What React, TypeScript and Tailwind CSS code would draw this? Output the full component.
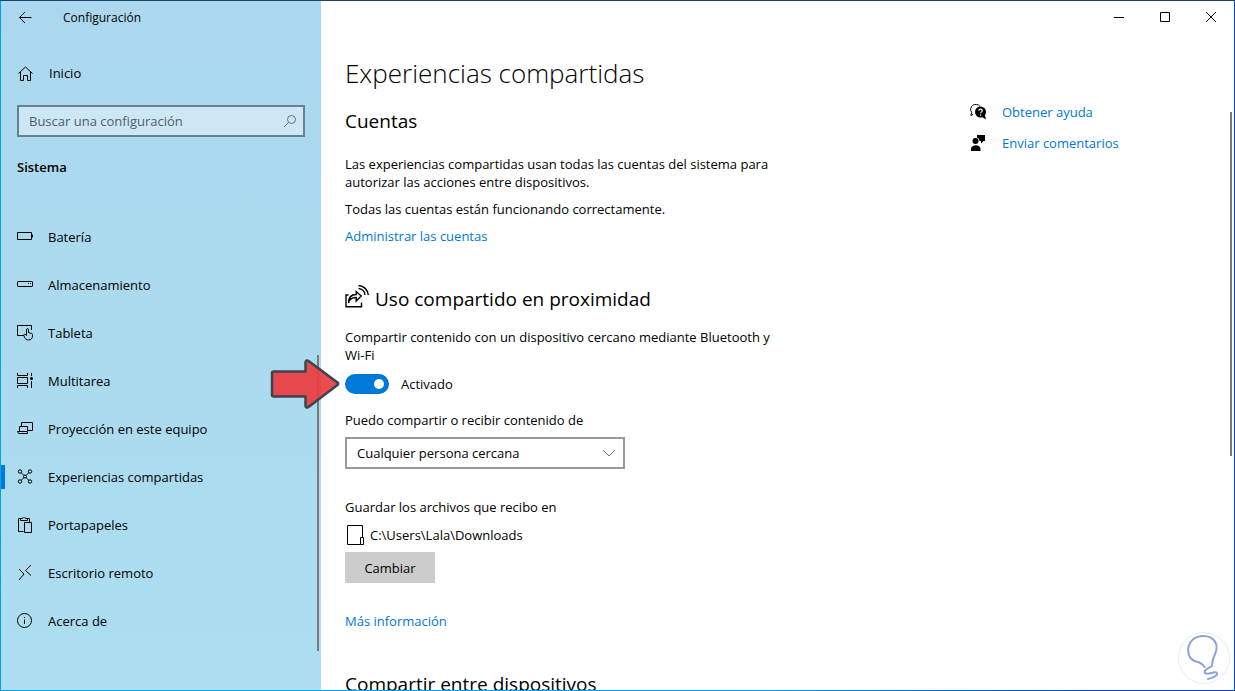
import { useState } from "react";
import type { ReactNode } from "react";

function Icon({ children, size = 16 }: { children: ReactNode; size?: number }) {
  return (
    <svg width={size} height={size} viewBox={`0 0 ${size} ${size}`} fill="none" stroke="currentColor" aria-hidden="true" className="shrink-0">
      {children}
    </svg>
  );
}

const navItems: { label: string; icon: ReactNode }[] = [
  {
    label: "Batería",
    icon: <path d="M.5 3.5h14v7H.5zM15.5 5.5v3" />,
  },
  {
    label: "Almacenamiento",
    icon: (
      <>
        <rect x=".5" y="4.5" width="15" height="5" rx=".5" />
        <path d="M11 6.5h1M13 6.5h1" />
      </>
    ),
  },
  {
    label: "Tableta",
    icon: (
      <>
        <path d="M7 10.5H.5v-10h14V5" />
        <path d="M9.5 9.5V4.7c0-1.5 2-1.5 2 0v3l2.8.6c.8.2 1.2.7 1.2 1.4V11c0 2.3-1.5 4-4 4-2 0-3.2-1-3.9-2.5L6.900 10.5c-.4-1 .9-1.7 1.6-1l1 1z" />
      </>
    ),
  },
  {
    label: "Multitarea",
    icon: (
      <>
        <path d="M.5 0v2.5h10V0M.5 4.5h10v6H.5zM.5 15v-2.5h10V15M14.5 0v3M14.5 8v7" />
        <circle cx="14.5" cy="5.5" r="1.5" fill="currentColor" stroke="none" />
      </>
    ),
  },
  {
    label: "Proyección en este equipo",
    icon: <path d="M4.5 5V1.5h11v8H11M2.5 10V5.5h8V10M.5 10.5h10v2h-9z" />,
  },
  {
    label: "Experiencias compartidas",
    icon: (
      <>
        <circle cx="3" cy="2.5" r="1.7" />
        <circle cx="13" cy="2.5" r="1.7" />
        <circle cx="3" cy="12.5" r="1.7" />
        <circle cx="13" cy="12.5" r="1.7" />
        <circle cx="8" cy="7.5" r="1.5" />
        <path d="M4.200 3.700 7 6.500M11.800 3.700 9 6.500M4.200 11.300 7 8.500M11.800 11.300 9 8.500" />
      </>
    ),
  },
  {
    label: "Portapapeles",
    icon: <path d="M3.5 1.5h-2v13h5M10.5 1.5h2V5M3.5 3.5v-2h2c0-2 3-2 3 0h2v2zM7.5 5.5h7v10h-7z" />,
  },
  {
    label: "Escritorio remoto",
    icon: <path d="m2 4 5 5-5 6M14 0 8.500 5.500l5.500 5" />,
  },
  {
    label: "Acerca de",
    icon: (
      <>
        <circle cx="7.5" cy="7.5" r="7" />
        <path d="M7.5 6.5V11M7.5 4v1" />
      </>
    ),
  },
];

function Sidebar() {
  const [current, setCurrent] = useState("Experiencias compartidas");
  const [query, setQuery] = useState("");

  return (
    <aside className="relative w-80 shrink-0 bg-linear-to-b from-[#abd8ee] to-[#acddf0]">
      <header className="flex h-[34px] items-center">
        <button type="button" aria-label="Atrás" className="flex h-8 w-12 items-center justify-center">
          <Icon>
            <path d="M14.5 7.5h-12M8 2 2.500 7.500 8 13" />
          </Icon>
        </button>
        <span className="ml-3.5 text-xs">Configuración</span>
      </header>

      <a href="#inicio" className="mt-3.5 flex h-12 items-center gap-4 px-4">
        <Icon>
          <path d="M1.5 8.5 8.500 2l7 6.500M3.500 7v8.500h3v-5h4v5h3V7" />
        </Icon>
        Inicio
      </a>

      <div className="relative mx-4 mt-2">
        <input
          type="text"
          aria-label="Buscar una configuración"
          placeholder="Buscar una configuración"
          value={query}
          onChange={(e) => setQuery(e.target.value)}
          className="block h-8 w-full border-2 border-[#67818e] bg-[#cee7f4] px-2.5 outline-none placeholder:text-[#4e6069]"
        />
        <span className="pointer-events-none absolute inset-y-0 right-2 flex items-center text-[#5f747e]">
          <Icon size={14}>
            <circle cx="8.5" cy="5.5" r="4" />
            <path d="M5.5 8.5 1 13" />
          </Icon>
        </span>
      </div>

      <h2 className="mt-5 px-4 leading-5 font-semibold">Sistema</h2>

      <nav className="mt-9">
        {navItems.map((item) => (
          <a
            key={item.label}
            href="#"
            aria-current={item.label === current ? "page" : undefined}
            onClick={() => setCurrent(item.label)}
            className="relative flex h-12 items-center gap-[15px] px-4"
          >
            {item.label === current && <span className="absolute left-0 h-6 w-1 bg-[#0078d7]" />}
            <Icon>{item.icon}</Icon>
            {item.label}
          </a>
        ))}
      </nav>

      <div className="absolute right-0.5 bottom-[39px] h-[296px] w-0.5 bg-[#7a7a7a]" />
    </aside>
  );
}

function WindowControls() {
  return (
    <div className="flex h-8 justify-end">
      <button type="button" aria-label="Minimizar" className="flex w-[46px] items-center justify-center">
        <Icon size={10}>
          <path d="M0 5.5h10" />
        </Icon>
      </button>
      <button type="button" aria-label="Maximizar" className="flex w-[46px] items-center justify-center">
        <Icon size={10}>
          <path d="M.5.5h9v9h-9z" />
        </Icon>
      </button>
      <button type="button" aria-label="Cerrar" className="flex w-[46px] items-center justify-center">
        <Icon size={10}>
          <path d="m0 0 10 10M10 0 0 10" />
        </Icon>
      </button>
    </div>
  );
}

function HelpLinks() {
  return (
    <div className="flex w-[264px] shrink-0 flex-col gap-[11px] pt-[69px] text-[#0078d7]">
      <a href="#ayuda" className="flex h-5 items-center gap-4">
        <span className="text-black">
          <Icon>
            <path d="M3 10.5.800 11.500l.8-3A5 5 0 1 1 10 2.500" />
            <circle cx="10.5" cy="8" r="5.5" fill="currentColor" stroke="none" />
            <path d="m12 13 4 2.500-1.300-5z" fill="currentColor" stroke="none" />
            <path d="M8.900 6.700c0-2.200 3.400-2.200 3.400 0 0 1.200-1.700 1.200-1.700 2.600M10.600 10.500v1.200" stroke="#fff" strokeWidth="1.2" />
          </Icon>
        </span>
        Obtener ayuda
      </a>
      <a href="#comentarios" className="flex h-5 items-center gap-4">
        <span className="text-black">
          <Icon>
            <g fill="currentColor" stroke="none">
              <path d="M7 0h8v6h-1.500L11 8.500V6H9.500A4 4 0 0 0 7 2.500z" />
              <circle cx="5.5" cy="6" r="3" />
              <path d="M1 16v-2c0-5 9.500-5 9.500 0v2z" />
            </g>
          </Icon>
        </span>
        Enviar comentarios
      </a>
    </div>
  );
}

function SharedExperiences() {
  const [enabled, setEnabled] = useState(true);
  const [audience, setAudience] = useState("Cualquier persona cercana");

  return (
    <main className="min-w-0 flex-1">
      <h1 className="mt-5 text-[26px] leading-10 font-light">Experiencias compartidas</h1>

      <section>
        <h2 className="mt-3.5 text-[19px] leading-7">Cuentas</h2>
        <p className="mt-5 max-w-[440px]">
          Las experiencias compartidas usan todas las cuentas del sistema para autorizar las acciones entre dispositivos.
        </p>
        <p className="mt-[9px]">Todas las cuentas están funcionando correctamente.</p>
        <a href="#cuentas" className="mt-[9px] block text-[#0078d7]">
          Administrar las cuentas
        </a>
      </section>

      <section>
        <h2 className="mt-10 flex items-start gap-1.5 text-[19px] leading-7">
          <Icon size={24}>
            <g strokeWidth="1.4">
              <path d="M3.500 10H1v11.800h15.500V17.500" />
              <path d="M3.500 18c.8-4 3.500-5.500 7.700-5.500V16l5-5-5-4.500v3C6.500 9.500 3.500 12.500 3.500 18z" />
              <path d="M13.500 3.500c3.600.3 6.300 3 6.600 6.500M13.500.500c5.300.300 9.300 4.200 9.800 9.500" />
            </g>
          </Icon>
          Uso compartido en proximidad
        </h2>
        <p className="mt-[15px] max-w-[440px]">
          Compartir contenido con un dispositivo cercano mediante Bluetooth y Wi-Fi
        </p>
        <label className="mt-2.5 flex w-fit items-center gap-3">
          <input
            type="checkbox"
            role="switch"
            checked={enabled}
            onChange={(e) => setEnabled(e.target.checked)}
            className="flex h-5 w-11 appearance-none items-center rounded-full bg-[#7a7a7a] px-[5px] before:size-2.5 before:rounded-full before:bg-white before:content-[''] checked:justify-end checked:bg-[#0078d7]"
          />
          {enabled ? "Activado" : "Desactivado"}
        </label>

        <label htmlFor="audience" className="mt-[17px] block">
          Puedo compartir o recibir contenido de
        </label>
        <div className="relative mt-2 w-[280px]">
          <select
            id="audience"
            value={audience}
            onChange={(e) => setAudience(e.target.value)}
            className="block h-8 w-full appearance-none border-2 border-[#999] bg-white px-2.5"
          >
            <option>Cualquier persona cercana</option>
            <option>Solo mis dispositivos</option>
          </select>
          <span className="pointer-events-none absolute inset-y-0 right-2.5 flex items-center text-[#777]">
            <Icon size={12}>
              <path d="m0 3 6 6 6-6" />
            </Icon>
          </span>
        </div>

        <p className="mt-[29px]">Guardar los archivos que recibo en</p>
        <div className="mt-[9px] flex items-center gap-[5px]">
          <Icon size={20}>
            <path d="M17.500 12V.500h-15v19h13" />
            <path d="M15.500 12.500h3v7h-3z" />
          </Icon>
          C:\Users\Lala\Downloads
        </div>
        <button type="button" className="mt-[7px] flex h-[31px] w-[90px] items-center justify-center bg-[#ccc]">
          Cambiar
        </button>
        <a href="#informacion" className="mt-[29px] block text-[#0078d7]">
          Más información
        </a>
      </section>

      <h2 className="mt-10 text-[19px] leading-7">Compartir entre dispositivos</h2>
    </main>
  );
}

// Red callout pointing at the proximity switch
function Callout() {
  return (
    <svg width="70" height="52" viewBox="0 0 70 52" aria-hidden="true" className="pointer-events-none absolute top-[357px] left-[270px]">
      <path
        d="M3.5 13.5h32v-9c0-2 1.500-2.500 3-1.500L67.500 24.500c1 1 1 1.500 0 2.500L38.500 49c-1.500 1-3 .5-3-1.500v-9h-32c-1 0-1.500-.5-1.500-1.500V15c0-1 .5-1.500 1.500-1.500z"
        fill="#ea3c40"
        fillOpacity=".92"
        stroke="#37474f"
        strokeWidth="2.5"
        strokeLinejoin="round"
      />
    </svg>
  );
}

function BulbMark() {
  return (
    <svg width="54" height="54" viewBox="0 0 54 54" fill="none" aria-hidden="true" className="pointer-events-none absolute right-1 bottom-1.5">
      <circle cx="27" cy="27" r="25.5" fill="#fff" stroke="#e6ebf7" />
      <path
        d="M27.500 36c-3-5-7-5-10-6C7 26 9 5 26 5c12 0 16 9 12 18-3 6-3 8-3 12-3 2-9 4-7 7 3 3 10-3 12 0 2 2-5 5-9 6"
        stroke="#8fa3d3"
        strokeWidth="2"
        strokeLinecap="round"
      />
    </svg>
  );
}

export default function App() {
  return (
    <div className="relative h-screen overflow-hidden border-t border-[#1b456f] bg-linear-to-r from-[#00a2ed] from-60% to-[#0046b8] to-90% px-px pb-px font-['Open_Sans','Noto_Sans',sans-serif] text-[13px] leading-[18px] text-black">
      <div className="flex h-full overflow-hidden bg-white">
        <Sidebar />
        <div className="relative min-w-0 flex-1">
          <WindowControls />
          <div className="flex pl-6">
            <SharedExperiences />
            <HelpLinks />
          </div>
          <div className="absolute top-[111px] right-0.5 h-[344px] w-0.5 bg-[#7a7a7a]" />
        </div>
      </div>
      <Callout />
      <BulbMark />
    </div>
  );
}
